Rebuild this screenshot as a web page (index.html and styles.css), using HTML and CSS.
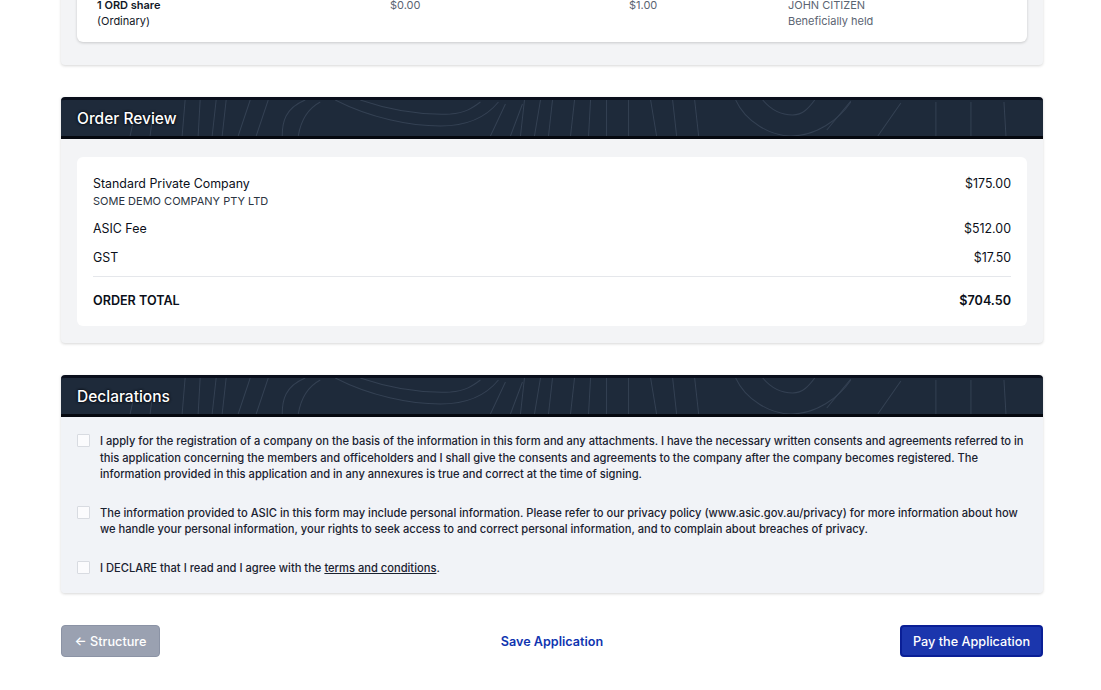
FILE: index.html
```html
<!DOCTYPE html>
<html lang="en">
<head>
    <meta charset="UTF-8">
    <meta name="viewport" content="width=device-width, initial-scale=1.0">
    <title>Review Application</title>
    <link rel="stylesheet" href="styles.css">
</head>
<body>
    <svg class="defs" width="0" height="0" aria-hidden="true">
        <symbol id="contours" viewBox="61 97 981 42" preserveAspectRatio="none">
            <g fill="none" stroke="#344153" stroke-width="1">
                <path d="M130 136 L134 118 M150 136 L152 120"/>
                <path d="M185 100 L182 136 M200 100 L198 136 M216 100 L212 136 M226 100 L222 136 M250 100 L238 136 M268 100 L256 136"/>
                <path d="M305 100 C285 108 282 122 282 136 M320 102 C305 110 300 124 298 136"/>
                <path d="M335 100 C370 118 410 126 440 126 C465 126 485 118 498 102"/>
                <path d="M360 100 C395 112 425 115 450 114 C465 113 472 108 480 102"/>
                <path d="M490 136 L505 104 M510 136 L522 104"/>
                <path d="M524 100 L520 136 M540 100 L534 136 M552 100 L548 136 M574 100 L570 136 M590 100 L588 136 M606 100 L606 136 M628 100 L628 136 M650 100 L656 136 M672 100 L676 136 M694 100 L698 136"/>
                <path d="M735 100 C745 122 770 136 790 136 C815 136 838 120 850 102"/>
                <path d="M762 100 C772 112 782 115 792 115 C802 115 808 108 814 100"/>
                <path d="M850 101 L826 130 M900 103 L877 136"/>
                <path d="M935 102 L935 136 M970 102 L970 136 M1003 102 L1005 136"/>
            </g>
        </symbol>
    </svg>

    <div class="page">
        <section class="panel panel-top">
            <div class="card shares">
                <div class="shares-row">
                    <div><strong>1 ORD share</strong><br>(Ordinary)</div>
                    <div class="muted">$0.00</div>
                    <div class="muted">$1.00</div>
                    <div class="muted">JOHN CITIZEN<br>Beneficially held</div>
                </div>
            </div>
        </section>

        <section class="panel">
            <header class="panel-head">
                <svg class="contours"><use href="#contours"/></svg>
                <h2>Order Review</h2>
            </header>
            <div class="panel-body">
                <div class="card order">
                    <div class="order-line first">
                        <div>Standard Private Company<div class="company">SOME DEMO COMPANY PTY LTD</div></div>
                        <div>$175.00</div>
                    </div>
                    <div class="order-line"><div>ASIC Fee</div><div>$512.00</div></div>
                    <div class="order-line"><div>GST</div><div>$17.50</div></div>
                    <div class="order-line total"><div>ORDER TOTAL</div><div>$704.50</div></div>
                </div>
            </div>
        </section>

        <section class="panel">
            <header class="panel-head">
                <svg class="contours"><use href="#contours"/></svg>
                <h2>Declarations</h2>
            </header>
            <div class="declarations">
                <label class="declaration">
                    <span class="check"></span>
                    <span>I apply for the registration of a company on the basis of the information in this form and any attachments. I have the necessary written consents and agreements referred to in this application concerning the members and officeholders and I shall give the consents and agreements to the company after the company becomes registered. The information provided in this application and in any annexures is true and correct at the time of signing.</span>
                </label>
                <label class="declaration">
                    <span class="check"></span>
                    <span>The information provided to ASIC in this form may include personal information. Please refer to our privacy policy (www.asic.gov.au/privacy) for more information about how we handle your personal information, your rights to seek access to and correct personal information, and to complain about breaches of privacy.</span>
                </label>
                <label class="declaration">
                    <span class="check"></span>
                    <span>I DECLARE that I read and I agree with the <a href="#">terms and conditions</a>.</span>
                </label>
            </div>
        </section>

        <div class="actions">
            <div><button type="button" class="btn btn-back">← Structure</button></div>
            <a href="#" class="save">Save Application</a>
            <div class="actions-end"><button type="button" class="btn btn-pay">Pay the Application</button></div>
        </div>
    </div>
</body>
</html>
```

FILE: styles.css
```css
html, body {
    margin: 0;
    height: 690px;
    overflow: hidden;
    background-color: #fff;
}
body {
    font-family: Inter, 'Liberation Sans', Arial, sans-serif;
    color: #111827;
}
.defs {
    display: block;
    height: 0;
}
.page {
    padding: 0 58px 0 61px;
}
.panel {
    background-color: #f3f4f6;
    border-radius: 0 0 4px 4px;
    box-shadow: 0 1px 3px rgba(0, 0, 0, 0.16);
    margin-bottom: 32px;
}
.panel-top {
    margin-top: -21px;
    padding-bottom: 23px;
    padding-top: 1px;
}
.panel-head {
    position: relative;
    height: 36px;
    border-top: 3px solid #0a0f1c;
    border-bottom: 3px solid #05080f;
    border-radius: 4px 4px 0 0;
    background-color: #1e2a3a;
    overflow: hidden;
}
.contours {
    position: absolute;
    left: 0;
    top: -3px;
    width: 100%;
    height: 42px;
}
.panel-head h2 {
    position: relative;
    margin: 0;
    padding-left: 16px;
    font-size: 15.5px;
    font-weight: 500;
    line-height: 37px;
    color: #fff;
    text-shadow: 0 0 3px #05080f, 0 0 2px #05080f;
}
.panel-body {
    padding: 18px 16px 17px;
}
.card {
    margin: 0 16px;
    background-color: #fff;
    border-radius: 6px;
    box-shadow: 0 1px 3px rgba(0, 0, 0, 0.18);
}
.panel-body .card {
    margin: 0;
    box-shadow: none;
}
.shares {
    padding: 17px 20px 13px;
    font-size: 11px;
    line-height: 16px;
}
.shares strong {
    font-weight: 600;
}
.shares-row {
    display: grid;
    grid-template-columns: 293px 239px 159px 1fr;
}
.muted {
    color: #5b6472;
}
.order {
    padding: 17px 16px 15px;
    font-size: 12.4px;
    line-height: 20px;
}
.order-line {
    display: flex;
    justify-content: space-between;
    padding: 5px 0 4px;
    color: #0b0f19;
}
.order-line.first {
    padding-top: 0;
    padding-bottom: 6px;
}
.company {
    font-size: 11px;
    line-height: 14px;
    color: #2b3441;
}
.order-line.total {
    margin-top: 4px;
    border-top: 1px solid #e5e7eb;
    padding: 14px 0 0;
    font-size: 12.6px;
    font-weight: 600;
}
.declarations {
    padding: 16px 15px 17px 16px;
    background-color: #f1f3f7;
    border-radius: 0 0 4px 4px;
}
.declaration {
    display: flex;
    gap: 10px;
    font-size: 11.15px;
    font-weight: 500;
    line-height: 16.5px;
    color: #1a2230;
    margin-bottom: 22px;
}
.declaration:last-child {
    margin-bottom: 0;
}
.check {
    flex: none;
    width: 11px;
    height: 11px;
    margin-top: 1px;
    background-color: #fbfbfd;
    border: 1px solid #d8dbe1;
    border-radius: 1px;
}
.declaration a {
    color: inherit;
}
.actions {
    display: grid;
    grid-template-columns: 1fr auto 1fr;
    align-items: center;
}
.actions-end {
    display: flex;
    justify-content: flex-end;
}
.btn {
    display: block;
    height: 32px;
    padding: 0;
    font-family: inherit;
    font-size: 12.7px;
    font-weight: 500;
    border-radius: 4px;
    color: #fff;
    white-space: nowrap;
}
.btn-back {
    width: 99px;
    background-color: #9aa1b1;
    border: 1px solid #8b93a5;
}
.btn-pay {
    width: 143px;
    background-color: #1b36ad;
    border: 2px solid #0a1f96;
}
.save {
    font-size: 12.6px;
    font-weight: 600;
    color: #0f35b0;
    text-decoration: none;
}
```
